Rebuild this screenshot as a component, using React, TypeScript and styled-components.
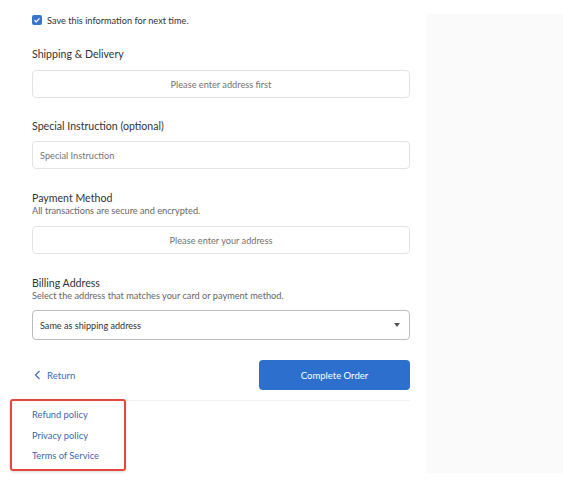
import React from "react";
import styled, { createGlobalStyle } from "styled-components";

const GlobalStyle = createGlobalStyle`
  html, body {
    margin: 0;
    padding: 0;
    background: #fff;
    font-family: Lato, "Open Sans", sans-serif;
    color: #333;
  }
`;

const Page = styled.div`
  display: flex;
  align-items: flex-start;
  width: 563px;
  height: 487px;
  overflow: hidden;
`;

const Main = styled.main`
  display: flex;
  flex-direction: column;
  width: 378px;
  padding-left: 32px;
`;

const Aside = styled.aside`
  width: 136px;
  height: 459px;
  margin: 14px 0 0 17px;
  background: #fafafa;
`;

const CheckRow = styled.label`
  display: flex;
  align-items: center;
  gap: 5px;
  margin-top: 15px;
  height: 10px;
  font-size: 9.2px;
  color: #333;
`;

const Check = styled.span`
  display: inline-flex;
  align-items: center;
  justify-content: center;
  width: 10px;
  height: 10px;
  border-radius: 2px;
  background: #3a74c9;
`;

const Section = styled.section<{ $top: number }>`
  display: flex;
  flex-direction: column;
  margin-top: ${(p) => p.$top}px;
`;

const Heading = styled.h3`
  margin: 0;
  font-size: 10.6px;
  line-height: 14px;
  font-weight: 400;
  color: #333;
`;

const Hint = styled.p`
  margin: 0;
  font-size: 9.2px;
  line-height: 12px;
  color: #666;
`;

const Field = styled.div<{ $center?: boolean; $top: number }>`
  display: flex;
  align-items: center;
  justify-content: ${(p) => (p.$center ? "center" : "flex-start")};
  box-sizing: border-box;
  height: 28px;
  margin-top: ${(p) => p.$top}px;
  padding: 0 7px;
  border: 1px solid #e3e3e3;
  border-radius: 4px;
  font-size: 9.2px;
  color: #737373;
`;

const Select = styled.div`
  display: flex;
  align-items: center;
  justify-content: space-between;
  box-sizing: border-box;
  height: 30px;
  margin-top: 8px;
  padding: 0 9px 0 7px;
  border: 1px solid #bdbdbd;
  border-radius: 4px;
  font-size: 9.1px;
  color: #333;
`;

const Caret = styled.span`
  width: 0;
  height: 0;
  border-left: 3.5px solid transparent;
  border-right: 3.5px solid transparent;
  border-top: 4px solid #555;
`;

const Actions = styled.div`
  display: flex;
  align-items: center;
  justify-content: space-between;
  margin-top: 20px;
  padding-bottom: 10px;
  border-bottom: 1px solid #f0f0f0;
`;

const ReturnLink = styled.a`
  display: inline-flex;
  align-items: center;
  gap: 6px;
  padding-left: 2px;
  font-size: 9.6px;
  color: #3a6fbf;
`;

const PrimaryButton = styled.button`
  width: 151px;
  height: 30px;
  border: none;
  border-radius: 4px;
  background: #2c6fcc;
  color: #fff;
  font-family: Lato, sans-serif;
  font-size: 9.5px;
`;

const Policies = styled.nav`
  display: flex;
  flex-direction: column;
  gap: 8.5px;
  width: 92px;
  margin: -2px 0 0 -22px;
  padding: 8px 0 7px 20px;
  border: 2px solid #e4473d;
  border-radius: 3px;
  box-shadow: 0 1px 3px rgba(0, 0, 0, 0.15);
`;

const PolicyLink = styled.a`
  font-size: 9.3px;
  line-height: 12px;
  color: #3a67b0;
`;

export default function App() {
  return (
    <>
      <GlobalStyle />
      <Page>
        <Main>
          <CheckRow>
            <Check>
              <svg width="8" height="8" viewBox="0 0 8 8">
                <path d="M1.5 4.2 L3.2 5.8 L6.5 2.3" stroke="#fff" strokeWidth="1.2" fill="none" />
              </svg>
            </Check>
            Save this information for next time.
          </CheckRow>

          <Section $top={22}>
            <Heading>Shipping &amp; Delivery</Heading>
            <Field $center $top={9}>Please enter address first</Field>
          </Section>

          <Section $top={21}>
            <Heading>Special Instruction (optional)</Heading>
            <Field $top={8}>Special Instruction</Field>
          </Section>

          <Section $top={22}>
            <Heading>Payment Method</Heading>
            <Hint>All transactions are secure and encrypted.</Hint>
            <Field $center $top={9}>Please enter your address</Field>
          </Section>

          <Section $top={22}>
            <Heading>Billing Address</Heading>
            <Hint>Select the address that matches your card or payment method.</Hint>
            <Select>
              Same as shipping address
              <Caret />
            </Select>
          </Section>

          <Actions>
            <ReturnLink>
              <svg width="7" height="10" viewBox="0 0 7 10">
                <path d="M5.5 1 L1.5 5 L5.5 9" stroke="#3a6fbf" strokeWidth="1.2" fill="none" />
              </svg>
              Return
            </ReturnLink>
            <PrimaryButton>Complete Order</PrimaryButton>
          </Actions>

          <Policies>
            <PolicyLink>Refund policy</PolicyLink>
            <PolicyLink>Privacy policy</PolicyLink>
            <PolicyLink>Terms of Service</PolicyLink>
          </Policies>
        </Main>
        <Aside />
      </Page>
    </>
  );
}
